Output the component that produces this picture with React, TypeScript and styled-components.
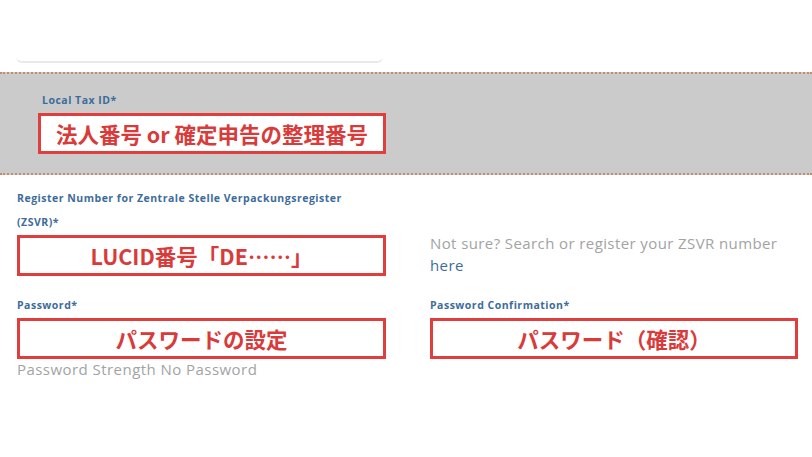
import React from 'react';
import styled, { createGlobalStyle } from 'styled-components';

const GlobalStyle = createGlobalStyle`
  html, body {
    margin: 0;
    padding: 0;
    background: #ffffff;
  }
  body {
    font-family: 'Open Sans', 'Noto Sans', sans-serif;
  }
`;

const Page = styled.div`
  width: 812px;
  height: 457px;
  overflow: hidden;
  background: #ffffff;
`;

const TopCard = styled.div`
  margin: 0 429px 0 16px;
  height: 61px;
  border-bottom: 2px solid #e9e9e9;
  border-radius: 0 0 6px 6px;
`;

const Band = styled.section`
  margin-top: 9px;
  background: #cbcbcb;
  border-top: 2px dotted #c88a6c;
  border-bottom: 2px dotted #c88a6c;
  padding: 14px 0 19px 38px;
`;

const Label = styled.div<{ $indent?: number }>`
  padding-left: ${(p) => p.$indent ?? 0}px;
  font-family: 'Open Sans', 'Noto Sans', sans-serif;
  font-weight: 700;
  font-size: 10.5px;
  line-height: 24px;
  color: #3d6c9b;
  letter-spacing: 0.5px;
`;

const RedBox = styled.div<{ $width?: number }>`
  box-sizing: border-box;
  width: ${(p) => (p.$width ? `${p.$width}px` : '100%')};
  height: 41px;
  margin-top: 1px;
  border: 3px solid #e03d3d;
  background: #ffffff;
  display: flex;
  align-items: center;
  justify-content: center;
  font-family: 'Noto Sans CJK JP', 'Noto Sans', sans-serif;
  font-weight: 700;
  font-size: 21.5px;
  color: #d93a3a;
  white-space: nowrap;
`;

const Dots = styled.span`
  font-feature-settings: 'fwid' 1;
`;

const Form = styled.div`
  display: grid;
  grid-template-columns: 369px 368px;
  column-gap: 44px;
  row-gap: 17px;
  margin-top: 11px;
  padding-left: 17px;
`;

const Field = styled.div`
  display: flex;
  flex-direction: column;
`;

const HelpText = styled.div`
  align-self: end;
  font-size: 15px;
  line-height: 22px;
  color: #a3a3a3;
  letter-spacing: 0.4px;
`;

const Link = styled.span`
  color: #3d6c9b;
`;

const Strength = styled.div`
  font-size: 15px;
  line-height: 20px;
  color: #a3a3a3;
  letter-spacing: 0.45px;
`;

export default function App() {
  return (
    <Page>
      <GlobalStyle />
      <TopCard />
      <Band>
        <Label $indent={4}>Local Tax ID*</Label>
        <RedBox $width={348} lang="ja">法人番号 or 確定申告の整理番号</RedBox>
      </Band>
      <Form>
        <Field>
          <Label>
            Register Number for Zentrale Stelle Verpackungsregister
            <br />
            (ZSVR)*
          </Label>
          <RedBox lang="ja">
            LUCID番号「DE<Dots>……</Dots>」
          </RedBox>
        </Field>
        <HelpText>
          Not sure? Search or register your ZSVR number
          <br />
          <Link>here</Link>
        </HelpText>
        <Field>
          <Label>Password*</Label>
          <RedBox lang="ja">パスワードの設定</RedBox>
          <Strength>Password Strength No Password</Strength>
        </Field>
        <Field>
          <Label>Password Confirmation*</Label>
          <RedBox lang="ja">パスワード（確認）</RedBox>
        </Field>
      </Form>
    </Page>
  );
}
